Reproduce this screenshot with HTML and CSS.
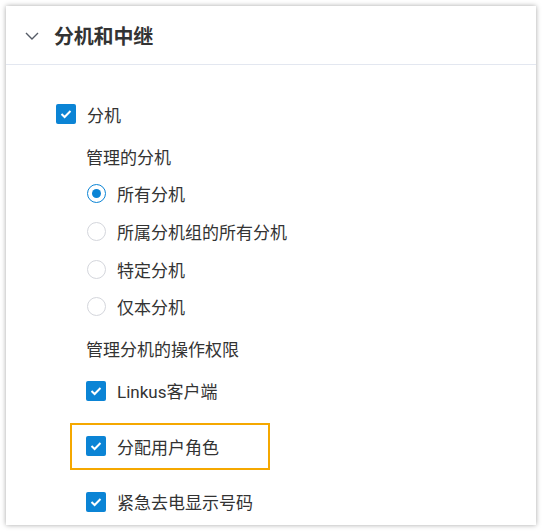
FILE: index.html
```html
<!DOCTYPE html>
<html lang="zh-CN">
<head>
<meta charset="utf-8">
<link rel="stylesheet" href="styles.css">
</head>
<body>
<div class="card">
  <div class="header">
    <svg class="chevron" width="14" height="8" viewBox="0 0 14 8"><path d="M1 1 L7 7 L13 1" fill="none" stroke="#555b66" stroke-width="1.4"/></svg>
    <span class="title">分机和中继</span>
  </div>
  <div class="content">
    <div class="row">
      <span class="cb"><svg width="12" height="10" viewBox="0 0 12 10"><path d="M1.5 5 L4.6 8 L10.5 2" fill="none" stroke="#fff" stroke-width="2"/></svg></span>
      <span class="text">分机</span>
    </div>
    <div class="sub">
      <div class="row label first">管理的分机</div>
      <div class="row radio-row"><span class="radio on"></span><span class="text">所有分机</span></div>
      <div class="row radio-row"><span class="radio"></span><span class="text">所属分机组的所有分机</span></div>
      <div class="row radio-row"><span class="radio"></span><span class="text">特定分机</span></div>
      <div class="row radio-row"><span class="radio"></span><span class="text">仅本分机</span></div>
      <div class="row label second">管理分机的操作权限</div>
      <div class="row">
        <span class="cb"><svg width="12" height="10" viewBox="0 0 12 10"><path d="M1.5 5 L4.6 8 L10.5 2" fill="none" stroke="#fff" stroke-width="2"/></svg></span>
        <span class="text">Linkus客户端</span>
      </div>
      <div class="highlight">
        <span class="cb"><svg width="12" height="10" viewBox="0 0 12 10"><path d="M1.5 5 L4.6 8 L10.5 2" fill="none" stroke="#fff" stroke-width="2"/></svg></span>
        <span class="text">分配用户角色</span>
      </div>
      <div class="row last">
        <span class="cb"><svg width="12" height="10" viewBox="0 0 12 10"><path d="M1.5 5 L4.6 8 L10.5 2" fill="none" stroke="#fff" stroke-width="2"/></svg></span>
        <span class="text">紧急去电显示号码</span>
      </div>
    </div>
  </div>
</div>
</body>
</html>
```

FILE: styles.css
```css
* { box-sizing: border-box; }
html, body { margin: 0; padding: 0; background: #fff; }
body {
  padding: 6px;
  font-family: "Roboto", "Noto Sans CJK SC", sans-serif;
  color: #333;
}
.card {
  width: 530px;
  height: 519px;
  background: #fff;
  box-shadow: 0 0 5px rgba(0,0,0,0.35);
  overflow: hidden;
}
.header {
  height: 59px;
  border-bottom: 1px solid #e3e7f0;
  display: flex;
  align-items: center;
  padding-left: 19px;
}
.chevron { margin-right: 15px; margin-top: 1px; }
.title {
  font-size: 20px;
  font-weight: 700;
  color: #333;
  letter-spacing: -0.2px;
}
.content {
  padding: 30px 0 0 50px;
}
.row {
  height: 38px;
  display: flex;
  align-items: center;
  font-size: 17px;
}
.radio-row { height: 37.7px; }
.sub {
  padding-left: 30px;
}
.label.first { margin-top: 4px; }
.label.second { margin-top: 4px; margin-bottom: 4px; }
.cb {
  width: 20px;
  height: 20px;
  border-radius: 2px;
  background: #0b84d5;
  display: inline-flex;
  align-items: center;
  justify-content: center;
  flex: none;
}
.text { margin-left: 11px; }
.radio {
  width: 19px;
  height: 19px;
  border-radius: 50%;
  border: 1px solid #d4d6dc;
  flex: none;
  margin-left: 1px;
  position: relative;
}
.radio.on {
  border: 1.5px solid #0b84d5;
}
.radio.on::after {
  content: "";
  position: absolute;
  left: 3.5px;
  top: 3.5px;
  width: 9px;
  height: 9px;
  border-radius: 50%;
  background: #0b84d5;
}
.highlight {
  width: 200px;
  height: 47px;
  flex: none;
  margin-left: -16px;
  margin-top: 13px;
  border: 2px solid #f5a800;
  display: flex;
  align-items: center;
  padding-left: 14px;
  font-size: 17px;
}
.row.last { margin-top: 13px; }
```
